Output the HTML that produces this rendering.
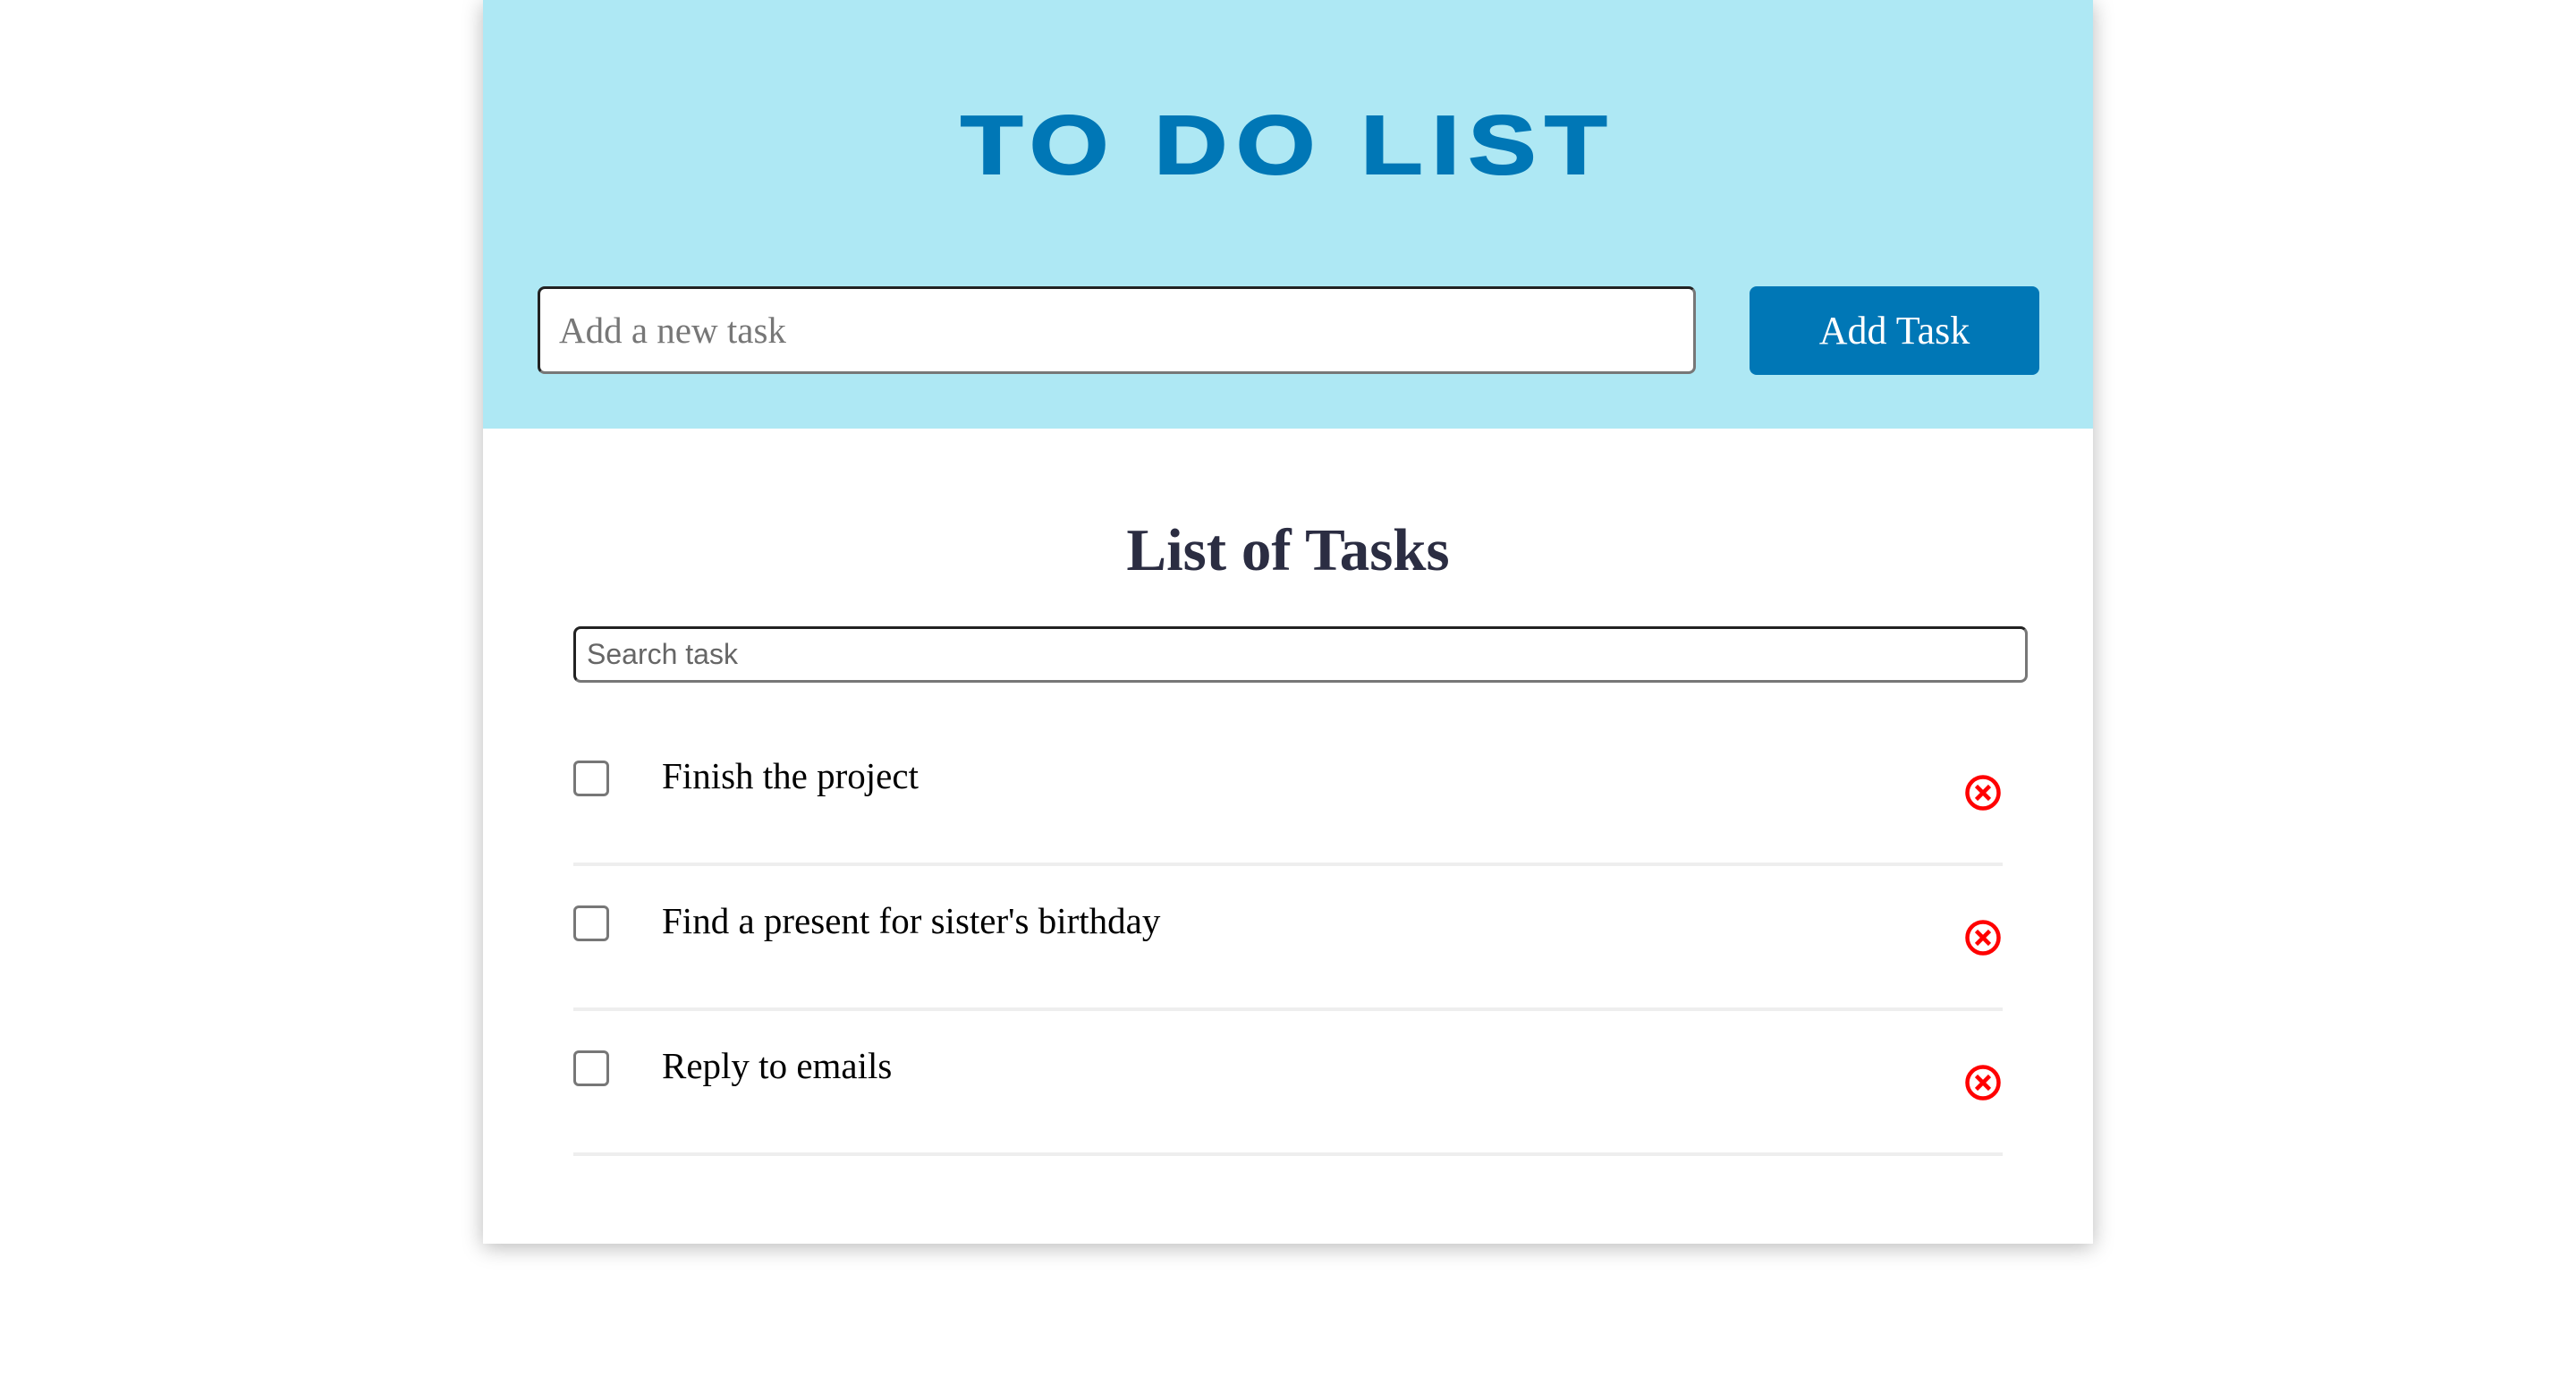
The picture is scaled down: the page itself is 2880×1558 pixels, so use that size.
<!DOCTYPE html>
<html><head><meta charset="utf-8"><style>
*{box-sizing:border-box;margin:0;padding:0}
body{width:2880px;height:1558px;background:#fff;position:relative;overflow:hidden;font-family:"Liberation Serif",serif}
.card{position:absolute;left:540px;top:0;width:1800px;height:1390px;background:#fff;box-shadow:0 4px 22px rgba(0,0,0,0.28)}
.hdr{position:absolute;left:0;top:0;width:1800px;height:479px;background:#aee8f4}
.title{position:absolute;left:0;width:1800px;top:112px;text-align:center;font-family:"Liberation Sans",sans-serif;font-weight:bold;font-size:93px;line-height:100px;color:#0077b6}
.title span{display:inline-block;transform:scaleX(1.22);letter-spacing:8px;-webkit-text-stroke:2px #0077b6}
.inp{position:absolute;left:61px;top:320px;width:1295px;height:98px;background:#fff;border:3px solid #222;border-right-color:#777;border-bottom-color:#777;border-radius:8px;font-size:41px;color:#777;padding:22px 0 0 21px}
.btn{position:absolute;left:1416px;top:320px;width:324px;height:99px;background:#0077b6;border-radius:8px;color:#fff;font-size:44px;text-align:center;line-height:99px}
.h2{position:absolute;left:0;width:1800px;top:575px;text-align:center;font-weight:bold;font-size:67px;color:#2b2d42;line-height:80px}
.search{position:absolute;left:101px;top:700px;width:1626px;height:63px;border:3px solid #222;border-right-color:#777;border-bottom-color:#777;border-radius:8px;font-family:"Liberation Sans",sans-serif;font-size:32px;color:#666;padding:10px 0 0 12px}
.row{position:absolute;left:101px;width:1598px;height:162px}
.cb{position:absolute;left:0;top:44px;width:40px;height:40px;border:3px solid #777;border-radius:6px}
.txt{position:absolute;left:99px;top:36px;font-size:41px;color:#000;line-height:50px}
.del{position:absolute;left:1552px;top:56px}
.sep{position:absolute;left:0;bottom:0;width:1598px;height:4px;background:#eee}
</style></head><body>
<div class="card">
<div class="hdr">
<div class="title"><span>TO DO LIST</span></div>
<div class="inp">Add a new task</div>
<div class="btn">Add Task</div>
</div>
<div class="h2">List of Tasks</div>
<div class="search">Search task</div>
<div class="row" style="top:806px"><div class="cb"></div><div class="txt">Finish the project</div><svg class="del" width="48" height="48" viewBox="0 0 48 48"><circle cx="24" cy="24" r="17.5" fill="none" stroke="#f00" stroke-width="4.5"/><path d="M16.5 16.5L31.5 31.5M31.5 16.5L16.5 31.5" stroke="#f00" stroke-width="4.5"/></svg><div class="sep"></div></div>
<div class="row" style="top:968px"><div class="cb"></div><div class="txt">Find a present for sister's birthday</div><svg class="del" width="48" height="48" viewBox="0 0 48 48"><circle cx="24" cy="24" r="17.5" fill="none" stroke="#f00" stroke-width="4.5"/><path d="M16.5 16.5L31.5 31.5M31.5 16.5L16.5 31.5" stroke="#f00" stroke-width="4.5"/></svg><div class="sep"></div></div>
<div class="row" style="top:1130px"><div class="cb"></div><div class="txt">Reply to emails</div><svg class="del" width="48" height="48" viewBox="0 0 48 48"><circle cx="24" cy="24" r="17.5" fill="none" stroke="#f00" stroke-width="4.5"/><path d="M16.5 16.5L31.5 31.5M31.5 16.5L16.5 31.5" stroke="#f00" stroke-width="4.5"/></svg><div class="sep"></div></div>
</div>
</body></html>
